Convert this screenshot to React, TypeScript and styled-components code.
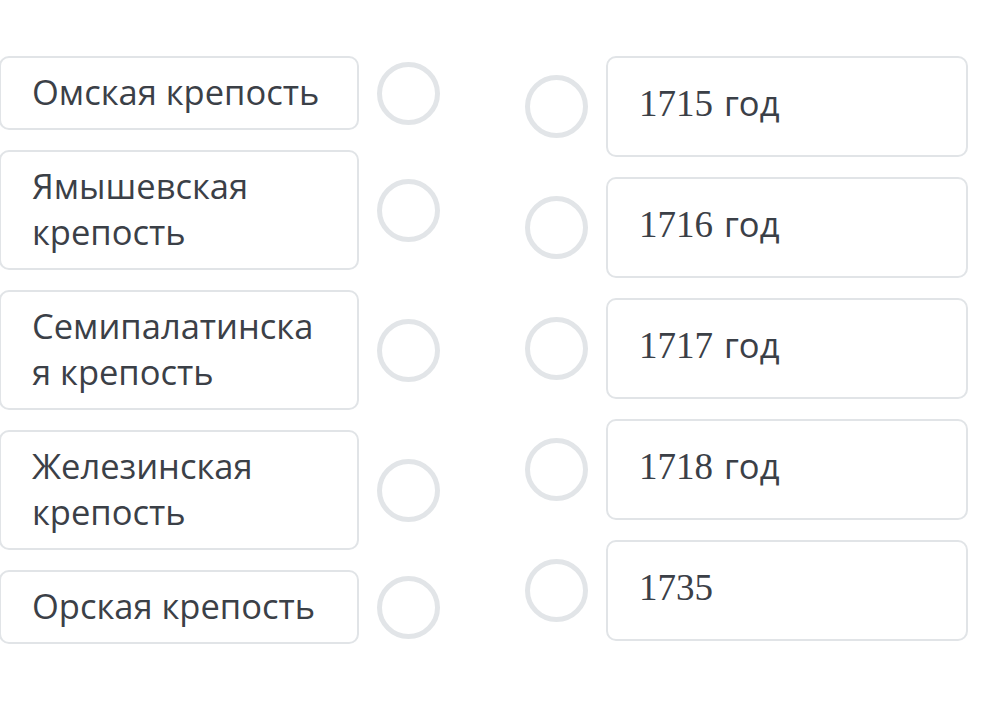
import * as React from 'react';
import styled, { createGlobalStyle } from 'styled-components';

const GlobalStyle = createGlobalStyle`
  html, body {
    margin: 0;
    padding: 0;
    background: #ffffff;
  }
  body {
    font-family: 'Open Sans', 'Noto Sans', sans-serif;
    color: #3b4047;
  }
`;

const Page = styled.div`
  width: 998px;
  height: 723px;
  overflow: hidden;
  display: flex;
  align-items: flex-start;
  padding-top: 56px;
  box-sizing: border-box;
`;

const Column = styled.div<{ $offset: number; $gap: number }>`
  display: flex;
  flex-direction: column;
  gap: ${p => p.$gap}px;
  margin-left: ${p => p.$offset}px;
`;

const Row = styled.div`
  display: flex;
  align-items: center;
`;

const Card = styled.div<{ $width: number; $minHeight?: number }>`
  box-sizing: border-box;
  width: ${p => p.$width}px;
  min-height: ${p => p.$minHeight ?? 0}px;
  border: 2px solid #e1e4e7;
  border-radius: 10px;
  background: #ffffff;
`;

const LeftText = styled.div`
  padding: 11px 34px 13px 31px;
  font-size: 34.5px;
  line-height: 46px;
  color: #3b4047;
  overflow-wrap: anywhere;
`;

const RightText = styled.div`
  padding: 22px 20px 12px 31px;
  font-size: 34.5px;
  line-height: 46px;
  color: #3b4047;
  white-space: nowrap;
`;

const Year = styled.span`
  font-family: 'Liberation Serif', 'Times New Roman', serif;
  font-size: 37px;
  margin-right: 11px;
`;

const Radio = styled.div<{ $side: 'left' | 'right' }>`
  box-sizing: border-box;
  width: 63px;
  height: 63px;
  border-radius: 50%;
  border: 5px solid #e2e5e8;
  flex-shrink: 0;
  ${p => (p.$side === 'left' ? 'margin-left: 18px;' : 'margin-right: 18px;')}
`;

const forts = [
  'Омская крепость',
  'Ямышевская крепость',
  'Семипалатинская крепость',
  'Железинская крепость',
  'Орская крепость',
];

const years: { year: string; suffix?: string }[] = [
  { year: '1715', suffix: 'год' },
  { year: '1716', suffix: 'год' },
  { year: '1717', suffix: 'год' },
  { year: '1718', suffix: 'год' },
  { year: '1735' },
];

export default function App() {
  return (
    <>
      <GlobalStyle />
      <Page>
        <Column $offset={-1} $gap={20}>
          {forts.map(f => (
            <Row key={f}>
              <Card $width={360}>
                <LeftText>{f}</LeftText>
              </Card>
              <Radio $side="left" />
            </Row>
          ))}
        </Column>
        <Column $offset={85} $gap={20}>
          {years.map(y => (
            <Row key={y.year}>
              <Radio $side="right" />
              <Card $width={362} $minHeight={101}>
                <RightText>
                  <Year>{y.year}</Year>
                  {y.suffix}
                </RightText>
              </Card>
            </Row>
          ))}
        </Column>
      </Page>
    </>
  );
}
